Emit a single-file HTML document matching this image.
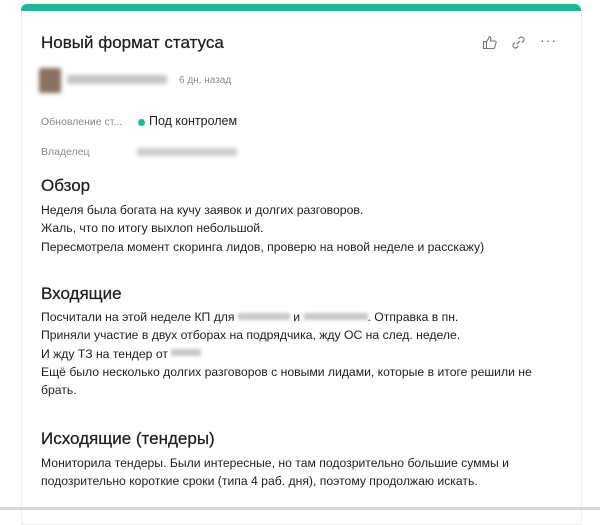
<!DOCTYPE html>
<html><head><meta charset="utf-8"><style>
body{margin:0;width:600px;height:510px;background:#fff;font-family:"Liberation Sans",Arial,sans-serif;color:#1f1f1f;position:relative;overflow:hidden}
.card{position:absolute;left:21px;top:4px;width:559px;height:520px;border:1px solid #ececec;border-top:none;border-radius:8px 8px 0 0;background:#fff}
.bar{position:absolute;left:21px;top:4px;width:560px;height:7px;background:#13bc98;border-radius:6px 6px 0 0}
.a{position:absolute;white-space:nowrap}
.blur{position:absolute;background:#bdbdbd;filter:blur(2px);border-radius:2px}
.ib{display:inline-block;height:7px;background:#c8c8c8;filter:blur(1.5px);vertical-align:middle;margin-bottom:3px}
.p{font-size:12.2px;line-height:18.3px}
h2{margin:0;font-weight:normal;font-size:17px;-webkit-text-stroke:0.25px #1f1f1f}
.bottom{position:absolute;left:0;top:507px;width:600px;height:3px;background:#d8d8d8}
</style></head><body>
<div class="card"></div>
<div class="bar"></div>
<div class="a" style="left:41px;top:33px;font-size:17px;-webkit-text-stroke:0.25px #1f1f1f">Новый формат статуса</div>
<svg class="a" style="left:482px;top:35px" width="16" height="15" viewBox="0 0 16 15" fill="none" stroke="#777" stroke-width="1.1"><path d="M1.5 6.5h3v7h-3z M4.5 7l3-5.5c1 0 1.5.8 1.3 2L8.5 6H13c.8 0 1.3.7 1.1 1.4l-1.4 5.2c-.2.6-.6.9-1.2.9H4.5"/></svg>
<svg class="a" style="left:511px;top:35px" width="15" height="15" viewBox="0 0 15 15" fill="none" stroke="#777" stroke-width="1.1"><path d="M6 9l3-3M7.5 4l1.5-1.5a2.5 2.5 0 013.5 3.5L11 7.5M7.5 11L6 12.5A2.5 2.5 0 012.5 9L4 7.5"/></svg>
<div class="a" style="left:540px;top:32px;font-size:14px;color:#666;letter-spacing:1px">···</div>
<div class="blur" style="left:39px;top:68px;width:22px;height:25px;background:#8a7060"></div>
<div class="blur" style="left:67px;top:75px;width:100px;height:9px;background:#c4c4c4"></div>
<div class="a" style="left:179px;top:75px;font-size:10px;color:#888">6 дн. назад</div>
<div class="a" style="left:41px;top:116px;font-size:10.5px;color:#888">Обновление ст...</div>
<div class="a" style="left:138px;top:119px;width:7px;height:7px;border-radius:50%;background:#13bc98"></div>
<div class="a" style="left:149px;top:114px;font-size:12.5px">Под контролем</div>
<div class="a" style="left:41px;top:146px;font-size:10.5px;color:#888">Владелец</div>
<div class="blur" style="left:137px;top:148px;width:100px;height:8px;background:#ccc"></div>
<div class="a" style="left:41px;top:176px"><h2>Обзор</h2></div>
<div class="a p" style="left:41px;top:201px">Неделя была богата на кучу заявок и долгих разговоров.<br>Жаль, что по итогу выхлоп небольшой.<br>Пересмотрела момент скоринга лидов, проверю на новой неделе и расскажу)</div>
<div class="a" style="left:41px;top:284px"><h2>Входящие</h2></div>
<div class="a p" style="left:41px;top:308px">Посчитали на этой неделе КП для <span class="ib" style="width:52px"></span> и <span class="ib" style="width:64px"></span>. Отправка в пн.<br>Приняли участие в двух отборах на подрядчика, жду ОС на след. неделе.<br>И жду ТЗ на тендер от <span class="ib" style="width:30px"></span><br>Ещё было несколько долгих разговоров с новыми лидами, которые в итоге решили не<br>брать.</div>
<div class="a" style="left:41px;top:429px"><h2>Исходящие (тендеры)</h2></div>
<div class="a p" style="left:41px;top:454px">Мониторила тендеры. Были интересные, но там подозрительно большие суммы и<br>подозрительно короткие сроки (типа 4 раб. дня), поэтому продолжаю искать.</div>
<div class="bottom"></div>
</body></html>
